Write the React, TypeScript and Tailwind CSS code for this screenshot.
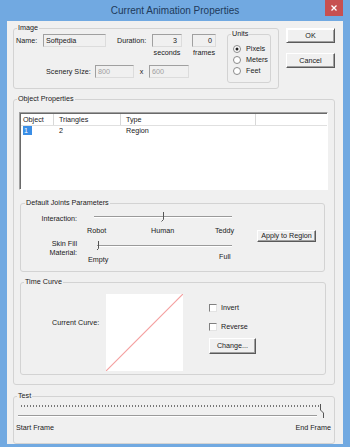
import type { ReactNode } from "react";

type GroupProps = {
  label: string;
  className?: string;
  labelPos?: string;
  children?: ReactNode;
};

// classic win groupbox, caption sits over the top border
function Group({ label, className = "", labelPos = "left-[3px]", children }: GroupProps) {
  return (
    <div className={`relative border border-[#d3d3d3] rounded-[3px] ${className}`}>
      <span
        className={`absolute top-[-6px] ${labelPos} px-[1px] bg-[#f0f0f0] leading-[10px] whitespace-nowrap`}
      >
        {label}
      </span>
      {children}
    </div>
  );
}

function Field({
  value,
  className = "",
}: {
  value: string;
  className?: string;
}) {
  return (
    <div
      className={`h-[13px] border border-t-[#a0a0a0] border-l-[#a0a0a0] border-r-[#dcdcdc] border-b-[#dcdcdc] bg-[#f0f0f0] leading-[11px] px-[2px] whitespace-nowrap ${className}`}
    >
      {value}
    </div>
  );
}

function Btn({ children, className = "" }: { children: ReactNode; className?: string }) {
  return (
    <button
      className={`flex items-center justify-center bg-[#f0f0f0] border border-t-white border-l-white border-r-[#5a5a5a] border-b-[#5a5a5a] shadow-[inset_-1px_-1px_0_#a0a0a0] leading-none whitespace-nowrap ${className}`}
    >
      {children}
    </button>
  );
}

function Radio({ label, checked = false }: { label: string; checked?: boolean }) {
  return (
    <div className="flex items-center h-[11px] pl-[5px]">
      <svg width="8" height="8" viewBox="0 0 8 8">
        <circle cx="4" cy="4" r="3.5" fill="#fff" stroke="#8a8a8a" />
        {checked && <circle cx="4" cy="4" r="1.5" fill="#222" />}
      </svg>
      <span className="ml-[5px] leading-[11px]">{label}</span>
    </div>
  );
}

function Check({ label }: { label: string }) {
  return (
    <div className="flex items-center h-[10px]">
      <div className="w-[8px] h-[8px] bg-white border border-t-[#808080] border-l-[#808080] border-r-[#e3e3e3] border-b-[#e3e3e3]" />
      <span className="ml-[4px] leading-[10px]">{label}</span>
    </div>
  );
}

function Slider({ width, pos }: { width: number; pos: number }) {
  return (
    <svg width={width} height="12" viewBox={`0 0 ${width} 12`}>
      <line x1="0" y1="5.5" x2={width} y2="5.5" stroke="#9a9a9a" />
      <line x1="0" y1="6.5" x2={width} y2="6.5" stroke="#ffffff" />
      <path
        d={`M${pos + 0.5} 1 V8.5 L${pos - 1.5} 10.5`}
        fill="none"
        stroke="#555"
        strokeWidth="1"
      />
    </svg>
  );
}

function TestTrack() {
  const ticks = [];
  for (let x = 5; x <= 302; x += 3) ticks.push(x);
  return (
    <svg width="310" height="16" viewBox="0 0 310 16">
      {ticks.map((x) => (
        <line key={x} x1={x + 0.5} y1="2" x2={x + 0.5} y2="4" stroke="#777" />
      ))}
      <line x1="2" y1="12.5" x2="301" y2="12.5" stroke="#9a9a9a" />
      <line x1="2" y1="13.5" x2="301" y2="13.5" stroke="#ffffff" />
      <path d="M304.5 1 V7 L307.5 10 V15" fill="none" stroke="#555" />
    </svg>
  );
}

export default function App() {
  return (
    <div className="w-[350px] h-[447px] bg-[#71a9e1] flex flex-col font-['Liberation_Sans',Arial,sans-serif] text-[7.2px] text-[#1a1a1a]">
      {/* title bar */}
      <div className="h-[21px] flex items-start shrink-0">
        <div className="w-[25px]" />
        <div className="flex-1 text-center text-[10px] leading-[21px] text-[#203a5a]">
          Current Animation Properties
        </div>
        <div className="w-[18px] h-[16px] bg-[#c75050] flex items-center justify-center">
          <svg width="6" height="6" viewBox="0 0 6 6">
            <path d="M0.5 0.5 L5.5 5.5 M5.5 0.5 L0.5 5.5" stroke="#fff" strokeWidth="1.3" />
          </svg>
        </div>
        <div className="w-[7px]" />
      </div>

      {/* client area */}
      <div className="ml-[7px] w-[336px] h-[423px] bg-[#f0f0f0] flex flex-col pt-[7px] pl-[6px]">
        <div className="flex">
          <Group label="Image" className="w-[266px] h-[61px]">
            <div className="flex pl-[2px] pt-[5px]">
              <div className="flex flex-col w-[200px]">
                <div className="flex">
                  <span className="w-[27px] leading-[13px]">Name:</span>
                  <Field value="Softpedia" className="w-[63px]" />
                  <span className="ml-[11px] w-[35px] leading-[13px]">Duration:</span>
                  <div className="flex flex-col items-center w-[30px]">
                    <Field value="3" className="w-[30px] text-right pr-[4px]" />
                    <span className="leading-[10px] mt-[1px]">seconds</span>
                  </div>
                  <div className="flex flex-col items-center w-[24px] ml-[10px]">
                    <Field value="0" className="w-[24px] text-right pr-[3px]" />
                    <span className="leading-[10px] mt-[1px]">frames</span>
                  </div>
                </div>
                <div className="flex mt-[7px] pl-[30px]">
                  <span className="w-[49px] leading-[13px]">Scenery SIze:</span>
                  <Field value="800" className="w-[39px] text-[#a0a0a0]" />
                  <span className="w-[15px] text-center leading-[13px]">x</span>
                  <Field value="600" className="w-[40px] text-[#a0a0a0]" />
                </div>
              </div>
              <Group label="Units" className="ml-[11px] w-[44px] h-[49px]">
                <div className="flex flex-col pt-[8px]">
                  <Radio label="Pixels" checked />
                  <Radio label="Meters" />
                  <Radio label="Feet" />
                </div>
              </Group>
            </div>
          </Group>
          <div className="ml-[7px] flex flex-col w-[49px]">
            <Btn className="h-[15px] w-[49px] border-[#404040] shadow-[inset_1px_1px_0_#fff,inset_-1px_-1px_0_#a0a0a0]">
              OK
            </Btn>
            <Btn className="mt-[10px] h-[15px] w-[49px]">Cancel</Btn>
          </div>
        </div>

        <Group label="Object Properties" className="mt-[10px] w-[322px] h-[286px]">
          <div className="flex flex-col pt-[12px]">
            {/* list view */}
            <div className="ml-[5px] w-[309px] h-[78px] bg-white border border-t-[#a0a0a0] border-l-[#a0a0a0] border-r-white border-b-white shadow-[inset_1px_1px_0_#6a6a6a]">
              <div className="flex h-[12px] ml-[1px] mt-[1px] border-b border-[#e0e0e0] leading-[11px]">
                <div className="w-[33px] pl-[2px] border-r border-[#d8d8d8]">Object</div>
                <div className="w-[67px] pl-[5px] border-r border-[#d8d8d8]">Triangles</div>
                <div className="w-[135px] pl-[5px] border-r border-[#d8d8d8]">Type</div>
                <div className="flex-1" />
              </div>
              <div className="flex h-[9px] ml-[1px] leading-[9px]">
                <div className="w-[33px] pl-[2px]">
                  <span className="bg-[#3a8ee6] text-white px-[1px] pr-[4px]">1</span>
                </div>
                <div className="w-[67px] pl-[5px]">2</div>
                <div className="w-[135px] pl-[5px]">Region</div>
              </div>
            </div>

            <Group
              label="Default Joints Parameters"
              labelPos="left-[4px]"
              className="mt-[13px] ml-[6px] w-[305px] h-[69px]"
            >
              <div className="flex">
                <div className="flex flex-col w-[229px] pt-[7px]">
                  <div className="flex items-start h-[12px]">
                    <span className="w-[56px] text-right mt-[3px] leading-[10px]">Interaction:</span>
                    <div className="ml-[17px]">
                      <Slider width={138} pos={69} />
                    </div>
                  </div>
                  <div className="flex mt-[3px] leading-[10px]">
                    <span className="w-[66px]" />
                    <span className="w-[64px]">Robot</span>
                    <span className="w-[64px]">Human</span>
                    <span>Teddy</span>
                  </div>
                  <div className="flex items-start mt-[3px]">
                    <span className="w-[56px] text-right leading-[9px]">
                      Skin Fill
                      <br />
                      Material:
                    </span>
                    <div className="ml-[20px] mt-[1px]">
                      <Slider width={135} pos={1} />
                    </div>
                  </div>
                  <div className="flex items-start mt-[-2px] leading-[10px]">
                    <span className="w-[67px]" />
                    <span className="w-[131px]">Empty</span>
                    <span className="mt-[-3px]">Full</span>
                  </div>
                </div>
                <Btn className="ml-[7px] mt-[26px] w-[59px] h-[12px]">Apply to Region</Btn>
              </div>
            </Group>

            <Group label="Time Curve" className="mt-[10px] ml-[6px] w-[306px] h-[93px]">
              <div className="flex items-start">
                <span className="ml-[31px] mt-[35px] w-[45px] leading-[10px] whitespace-nowrap">
                  Current Curve:
                </span>
                <div className="ml-[9px] mt-[11px] w-[77px] h-[77px] bg-white">
                  <svg width="77" height="77" viewBox="0 0 77 77">
                    <line x1="0" y1="77" x2="77" y2="0" stroke="#f4a0a0" strokeWidth="1.2" />
                  </svg>
                </div>
                <div className="ml-[26px] flex flex-col">
                  <div className="mt-[20px]">
                    <Check label="Invert" />
                  </div>
                  <div className="mt-[9px]">
                    <Check label="Reverse" />
                  </div>
                  <Btn className="mt-[6px] w-[47px] h-[16px]">Change...</Btn>
                </div>
              </div>
            </Group>
          </div>
        </Group>

        <Group label="Test" className="mt-[11px] w-[322px] h-[48px]">
          <div className="flex flex-col pt-[6px]">
            <div className="ml-[2px]">
              <TestTrack />
            </div>
            <div className="flex justify-between mt-[4px] pl-[2px] pr-[3px] leading-[10px]">
              <span>Start Frame</span>
              <span>End Frame</span>
            </div>
          </div>
        </Group>
      </div>
    </div>
  );
}
